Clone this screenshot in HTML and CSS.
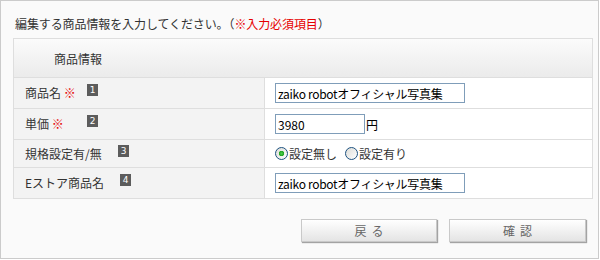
FILE: index.html
```html
<!DOCTYPE html>
<html lang="ja">
<head>
<meta charset="utf-8">
<title>商品情報編集</title>
<link rel="stylesheet" href="styles.css">
</head>
<body>
<div class="frame">
  <p class="lead">編集する商品情報を入力してください。（<span class="req">※入力必須項目</span>）</p>
  <div class="form">
    <div class="head">商品情報</div>

    <div class="label"><span class="ltext short">商品名 <span class="req">※</span></span><span class="badge">1</span></div>
    <div class="field"><input class="text wide" type="text" value="zaiko robotオフィシャル写真集"></div>

    <div class="label"><span class="ltext short">単価 <span class="req">※</span></span><span class="badge">2</span></div>
    <div class="field"><input class="text narrow" type="text" value="3980"><span class="unit">円</span></div>

    <div class="label short-row"><span class="ltext long">規格設定有/無</span><span class="badge">3</span></div>
    <div class="field short-row">
      <label class="opt"><input class="radio" type="radio" name="spec" checked><span>設定無し</span></label>
      <label class="opt"><input class="radio" type="radio" name="spec"><span>設定有り</span></label>
    </div>

    <div class="label last"><span class="ltext long2">Eストア商品名</span><span class="badge">4</span></div>
    <div class="field last"><input class="text wide" type="text" value="zaiko robotオフィシャル写真集"></div>
  </div>
  <div class="actions">
    <button class="btn back" type="button">戻る</button>
    <button class="btn confirm" type="button">確認</button>
  </div>
</div>
</body>
</html>
```
FILE: styles.css
```css
* { box-sizing: border-box; }
html, body { margin: 0; padding: 0; background: #fff; }
body {
  font-family: "Noto Sans CJK JP", "Liberation Sans", sans-serif;
  font-size: 12px;
  color: #333;
}
.frame {
  width: 599px;
  height: 259px;
  border: 1px solid #cbcbcb;
  background: #fafafa;
  padding: 14px 6px 0 12px;
}
.lead {
  margin: 0 0 5px 2px;
  line-height: 18px;
  height: 18px;
  letter-spacing: -0.1px;
}
.req { color: #e60000; }
.form {
  width: 580px;
  border: 1px solid #dedede;
  display: grid;
  grid-template-columns: 251px 327px;
  background: #fff;
}
.head {
  grid-column: 1 / span 2;
  height: 39px;
  border-bottom: 1px solid #dedede;
  background: linear-gradient(#fbfbfb, #ebebeb);
  padding-left: 40px;
  display: flex;
  align-items: center;
  color: #333;
}
.label {
  height: 31px;
  background: #f3f3f3;
  border-right: 1px solid #dedede;
  border-bottom: 1px solid #dedede;
  padding-left: 11px;
  display: flex;
  align-items: center;
}
.field {
  height: 31px;
  border-bottom: 1px solid #dedede;
  padding-left: 10px;
  display: flex;
  align-items: center;
  background: #fff;
}
.short-row { height: 28px; }
.last { border-bottom: none; height: 30px; }
.ltext { display: inline-block; line-height: 16px; }
.ltext.short { width: 62px; }
.ltext.long { width: 93px; }
.ltext.long2 { width: 95px; }
.badge {
  display: inline-block;
  width: 11px;
  height: 12px;
  background: #5c5c5c;
  color: #fff;
  font-family: "DejaVu Sans", sans-serif;
  font-size: 9px;
  line-height: 12px;
  text-align: center;
  margin-top: -6px;
}
.text {
  height: 20px;
  border: 1px solid #7f9db9;
  background: #fff;
  padding: 0 2px;
  font-family: "Noto Sans CJK JP", sans-serif;
  font-size: 12px;
  letter-spacing: -0.3px;
  color: #000;
  outline: none;
}
.text.wide { width: 190px; }
.text.narrow { width: 90px; letter-spacing: 0; }
.unit { margin-left: 1px; color: #000; }
.opt {
  display: inline-flex;
  align-items: center;
  margin-right: 8px;
  color: #333;
}
.radio {
  -webkit-appearance: none;
  appearance: none;
  width: 13px;
  height: 13px;
  margin: 0 1px 0 0;
  border: 1px solid #1c5180;
  border-radius: 50%;
  background: linear-gradient(135deg, #dcdcd7, #ffffff);
}
.radio:checked {
  background: radial-gradient(circle, #4cd04c 0, #21a121 2.5px, transparent 3px), linear-gradient(135deg, #dcdcd7, #ffffff);
}
.actions {
  display: flex;
  justify-content: flex-end;
  gap: 12px;
  margin-top: 20px;
  padding-right: 6px;
}
.btn {
  width: 136px;
  height: 23px;
  border: 1px solid #c9c9c9;
  background: linear-gradient(#ffffff, #e4e4e4);
  box-shadow: 1px 1px 1px rgba(0, 0, 0, 0.35);
  font-family: "Noto Sans CJK JP", sans-serif;
  font-size: 12px;
  color: #666;
  letter-spacing: 5px;
  padding: 0 0 0 5px;
  line-height: 21px;
}
.btn.confirm { width: 137px; }
```
